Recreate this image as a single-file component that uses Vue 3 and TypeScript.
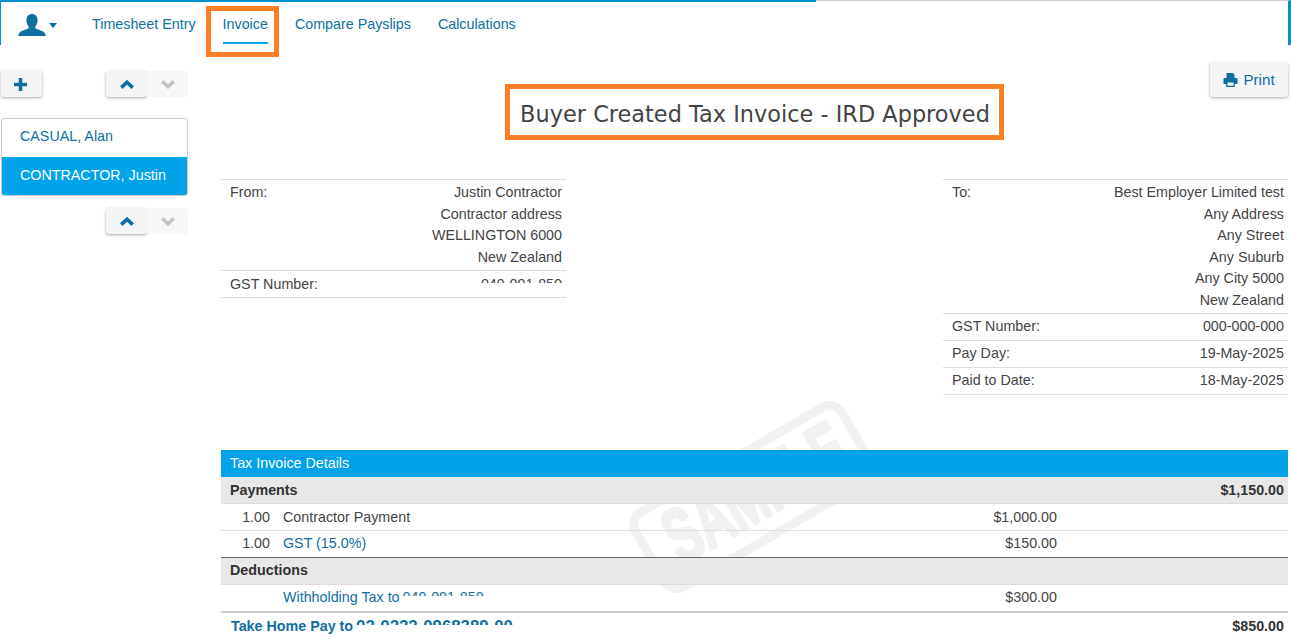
<script setup lang="ts">
const fromLines: string[] = ['Justin Contractor', 'Contractor address', 'WELLINGTON 6000', 'New Zealand']
const toLines: string[] = ['Best Employer Limited test', 'Any Address', 'Any Street', 'Any Suburb', 'Any City 5000', 'New Zealand']
const toRows = [
  { label: 'GST Number:', value: '000-000-000' },
  { label: 'Pay Day:', value: '19-May-2025' },
  { label: 'Paid to Date:', value: '18-May-2025' },
]
const tabs = ['Timesheet Entry', 'Invoice', 'Compare Payslips', 'Calculations']
</script>

<template>
  <div class="page">
    <header class="topbar">
      <div class="user">
        <svg width="28" height="22" viewBox="0 0 28 22" class="user-icon">
          <path d="M14 0c-3.600 0-5.600 2.700-5.600 6.300 0 2.500.9 4.700 2.300 6.100v1.700c-1.500 1.500-6.500 2.400-9.100 4.300C.9 19.100.400 20.500.300 22h27.400c-.1-1.500-.6-2.900-1.300-3.600-2.600-1.900-7.600-2.800-9.100-4.300v-1.700c1.400-1.400 2.300-3.600 2.300-6.100C19.600 2.700 17.600 0 14 0z" fill="#0e6fa0" />
        </svg>
        <span class="caret"></span>
      </div>
      <nav class="tabs">
        <a v-for="t in tabs" :key="t" class="tab" :class="{ active: t === 'Invoice' }">
          {{ t }}
          <span v-if="t === 'Invoice'" class="annot-tab"></span>
        </a>
      </nav>
    </header>

    <div class="body">
      <aside class="side">
        <div class="side-tools">
          <button class="btn sq">
            <svg width="13" height="13" viewBox="0 0 13 13" class="plus"><path d="M6.500 0v13M0 6.500h13" stroke="#0e6fa0" stroke-width="3.600" /></svg>
          </button>
          <div class="pair">
            <button class="btn sq">
              <svg width="14" height="9" viewBox="0 0 14 9"><path d="M1.300 7.600 7 2.300l5.700 5.300" fill="none" stroke="#0e6fa0" stroke-width="3.600" /></svg>
            </button>
            <button class="btn sq off">
              <svg width="14" height="9" viewBox="0 0 14 9"><path d="M1.300 1.400 7 6.700l5.700-5.300" fill="none" stroke="#c4c4c4" stroke-width="3.600" /></svg>
            </button>
          </div>
        </div>
        <ul class="people">
          <li>CASUAL, Alan</li>
          <li class="sel">CONTRACTOR, Justin</li>
        </ul>
        <div class="pair pair-low">
          <button class="btn sq">
            <svg width="14" height="9" viewBox="0 0 14 9"><path d="M1.300 7.600 7 2.300l5.700 5.300" fill="none" stroke="#0e6fa0" stroke-width="3.600" /></svg>
          </button>
          <button class="btn sq off">
            <svg width="14" height="9" viewBox="0 0 14 9"><path d="M1.300 1.400 7 6.700l5.700-5.300" fill="none" stroke="#c4c4c4" stroke-width="3.600" /></svg>
          </button>
        </div>
      </aside>

      <main class="main">
        <div class="head">
          <h1 class="title">Buyer Created Tax Invoice - IRD Approved</h1>
          <button class="btn print">
            <svg width="15" height="14" viewBox="0 0 15 14">
              <path d="M3.500 0h6.300L11.500 1.700V5h-8zM.5 6.200C.5 5.500 1 5 1.700 5h11.600c.7 0 1.200.5 1.200 1.200V11h-2.700v3H3.200v-3H.5zM4.500 9.500v3.200h6V9.500z" fill="#0e6fa0" fill-rule="evenodd" />
            </svg>
            Print
          </button>
        </div>

        <div class="parties">
          <section class="party">
            <div class="prow">
              <span>From:</span>
              <div class="stack"><div v-for="l in fromLines" :key="l">{{ l }}</div></div>
            </div>
            <div class="prow single low">
              <span>GST Number:</span>
              <span class="clip">049-091-850</span>
            </div>
          </section>
          <section class="party">
            <div class="prow to-first">
              <span>To:</span>
              <div class="stack"><div v-for="l in toLines" :key="l">{{ l }}</div></div>
            </div>
            <div v-for="r in toRows" :key="r.label" class="prow single">
              <span>{{ r.label }}</span>
              <span>{{ r.value }}</span>
            </div>
          </section>
        </div>

        <section class="details">
          <svg class="stamp" width="300" height="300" viewBox="0 0 300 300">
            <g transform="rotate(-30 150 150)">
              <rect x="29" y="107" width="238" height="86" rx="14" fill="none" stroke="#f1f1f1" stroke-width="9" />
              <text x="152" y="174" text-anchor="middle" textLength="200" lengthAdjust="spacingAndGlyphs" class="stamp-text">SAMPLE</text>
            </g>
          </svg>
          <div class="band">Tax Invoice Details</div>
          <div class="grp"><span>Payments</span><span>$1,150.00</span></div>
          <div class="line">
            <span class="qty">1.00</span><span>Contractor Payment</span><span class="amt">$1,000.00</span>
          </div>
          <div class="line last">
            <span class="qty">1.00</span><a class="lnk">GST (15.0%)</a><span class="amt">$150.00</span>
          </div>
          <div class="grp up"><span>Deductions</span></div>
          <div class="line thick">
            <span class="qty"></span>
            <a class="lnk">Withholding Tax to <span class="clip inl tight">049-091-850</span></a>
            <span class="amt">$300.00</span>
          </div>
          <div class="take">
            <a class="lnk">Take Home Pay to <span class="clip inl big">02-0222-0968389-00</span></a>
            <span>$850.00</span>
          </div>
        </section>
      </main>
    </div>
  </div>
</template>

<style>
html, body { margin: 0; background: #fff; overflow: hidden; }
</style>

<style scoped>
.page {
  position: relative;
  height: 639px;
  overflow: hidden;
  font-family: "Liberation Sans", Arial, sans-serif;
  font-size: 14.3px;
  line-height: 21.6px;
  color: #444;
  background: #fff;
}
.topbar {
  position: relative;
  display: flex;
  align-items: flex-start;
  height: 44px;
  border-top: 1px solid #ccc;
  box-sizing: content-box;
  padding-left: 1px;
  border-right: 3px solid #0092d0;
  border-left: 1px solid #0092d0;
}
.topbar::before {
  content: "";
  position: absolute;
  left: -1px;
  top: -1px;
  width: 816px;
  height: 2px;
  background: #0092d0;
}
.user {
  display: flex;
  align-items: center;
  width: 90px;
  padding: 13px 0 0 16px;
  box-sizing: border-box;
}
.user-icon { display: block; }
.caret {
  margin-left: 2.500px;
  width: 0;
  height: 0;
  border-left: 4.500px solid transparent;
  border-right: 4.500px solid transparent;
  border-top: 5px solid #0e6fa0;
}
.tabs { display: flex; gap: 27px; padding-top: 13px; }
.tab {
  position: relative;
  color: #0e6fa0;
  height: 29px;
  white-space: nowrap;
}
.tab.active { border-bottom: 2px solid #00a2e8; height: 28px; }
.annot-tab {
  position: absolute;
  left: -17px;
  right: -11px;
  top: -8px;
  height: 51px;
  box-sizing: border-box;
  border: 5px solid #ff7f27;
}
.body { display: flex; }
.side { width: 221px; flex: none; padding-left: 1px; box-sizing: border-box; }
.side-tools {
  display: flex;
  justify-content: space-between;
  width: 187px;
  margin-top: 26px;
}
.plus { margin-right: 2px; }
.pair { display: flex; }
.pair-low { justify-content: flex-end; width: 187px; margin-top: 12px; }
.btn {
  border: 0;
  padding: 0;
  margin: 0;
  font: inherit;
  background: #f5f5f5;
  border-radius: 3px;
  box-shadow: 0 1px 3px rgba(0, 0, 0, 0.35);
  color: #0e6fa0;
  display: flex;
  align-items: center;
  justify-content: center;
}
.sq { width: 41px; height: 26px; }
.btn.off { background: #f7f7f7; box-shadow: none; }
.people {
  list-style: none;
  margin: 21px 0 0;
  padding: 0;
  width: 187px;
  box-sizing: border-box;
  border: 1px solid #ccc;
  border-radius: 3px;
  overflow: hidden;
  color: #0e6fa0;
}
.people li { height: 38px; line-height: 35px; padding-left: 18px; }
.people .sel { background: #00a2e8; color: #fff; line-height: 36px; }
.main { width: 1067px; flex: none; }
.head {
  display: grid;
  grid-template-columns: 1fr auto 1fr;
  align-items: start;
  height: 134px;
  padding-top: 17px;
  box-sizing: border-box;
}
.title {
  grid-column: 2;
  margin: 22px 0 0;
  padding: 0 9px 0 10px;
  height: 56px;
  box-sizing: border-box;
  border: 5px solid #ff7f27;
  font-family: "DejaVu Sans", Verdana, sans-serif;
  font-weight: 400;
  font-size: 22.400px;
  letter-spacing: 0.020px;
  line-height: 50px;
  color: #444;
  white-space: nowrap;
}
.print {
  grid-column: 3;
  justify-self: end;
  width: 78px;
  height: 35px;
  gap: 5px;
  font-size: 15.200px;
}
.parties {
  display: flex;
  justify-content: space-between;
  height: 271px;
}
.party { width: 345px; border-top: 1px solid #ddd; align-self: flex-start; }
.prow {
  display: flex;
  justify-content: space-between;
  padding: 2px 4px 2px 9px;
  border-bottom: 1px solid #ddd;
  white-space: nowrap;
  box-sizing: border-box;
}
.to-first { height: 134px; }
.single { height: 27px; }
.low { padding-top: 3px; }
.stack { text-align: right; }
.clip {
  display: inline-block;
  height: 9px;
  overflow: hidden;
}
.clip.inl { vertical-align: top; height: 11px; }
.clip.tight { margin-left: -1px; }
.clip.big { font-size: 16.800px; height: 9px; margin-left: -1px; }
.details { position: relative; }
.stamp { position: absolute; left: 384px; top: -104px; }
.stamp-text {
  font-family: "Liberation Sans", Arial, sans-serif;
  font-weight: 700;
  font-size: 78px;
  fill: #f1f1f1;
  stroke: #f1f1f1;
  stroke-width: 3.500;
}
.band {
  position: relative;
  height: 27px;
  line-height: 27px;
  padding-left: 9px;
  background: #00a2e8;
  color: #fff;
}
.grp {
  position: relative;
  display: flex;
  justify-content: space-between;
  height: 27px;
  line-height: 26px;
  padding: 0 4px 0 9px;
  box-sizing: border-box;
  background: #e8e8e8;
  border-bottom: 1px solid #ddd;
  color: #333;
  font-weight: 700;
}
.grp.up { line-height: 24px; }
.line {
  position: relative;
  display: grid;
  grid-template-columns: 49px 1fr auto 227px;
  column-gap: 13px;
  height: 27px;
  line-height: 26px;
  box-sizing: border-box;
  border-bottom: 1px solid #ddd;
  white-space: nowrap;
}
.line::after { content: ""; }
.line.last { border-bottom-color: #666; line-height: 24px; }
.line.thick { border-bottom: 2px solid #ccc; height: 28px; line-height: 24px; }
.qty { text-align: right; }
.amt { margin-right: -9px; }
.lnk { color: #0e6fa0; }
.take {
  position: relative;
  display: flex;
  justify-content: space-between;
  padding: 3px 4px 0 10px;
  font-weight: 700;
  color: #333;
}
</style>
